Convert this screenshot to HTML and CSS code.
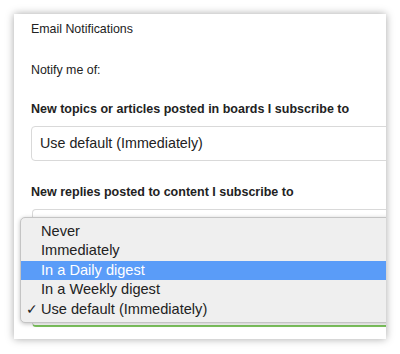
FILE: index.html
```html
<!DOCTYPE html>
<html>
<head>
<meta charset="utf-8">
<link rel="stylesheet" href="styles.css">
</head>
<body>
<div class="panel">
  <div class="title">Email Notifications</div>
  <div class="notify">Notify me of:</div>
  <div class="label">New topics or articles posted in boards I subscribe to</div>
  <div class="select">Use default (Immediately)</div>
  <div class="label label2">New replies posted to content I subscribe to</div>
  <div class="select-wrap">
    <div class="select select2"></div>
    <div class="menu">
      <div class="item">Never</div>
      <div class="item">Immediately</div>
      <div class="item active">In a Daily digest</div>
      <div class="item">In a Weekly digest</div>
      <div class="item checked"><span class="check">✓</span>Use default (Immediately)</div>
    </div>
  </div>
</div>
</body>
</html>
```
FILE: styles.css
```css
html, body {
  margin: 0;
  padding: 0;
  background: #fff;
}
body {
  width: 400px;
  height: 354px;
  overflow: hidden;
  font-family: "Liberation Sans", Arial, sans-serif;
  color: #222;
}
.panel {
  margin: 14px 0 0 14px;
  width: 372px;
  height: 325px;
  background: #fff;
  box-shadow: 0 0 8px rgba(0,0,0,0.35);
  overflow: hidden;
  padding-left: 17px;
  box-sizing: border-box;
}
.title {
  font-size: 12.4px;
  line-height: 14px;
  padding-top: 8px;
}
.notify {
  font-size: 12.4px;
  line-height: 14px;
  margin-top: 27px;
}
.label {
  font-size: 12.5px;
  font-weight: bold;
  line-height: 14px;
  margin-top: 25px;
}
.select {
  margin-top: 10px;
  width: 400px;
  height: 35px;
  border: 1px solid #d9d9d9;
  border-radius: 4px;
  box-sizing: border-box;
  font-size: 14.3px;
  line-height: 33px;
  padding-left: 8px;
  color: #222;
}
.label2 {
  margin-top: 24px;
}
.select-wrap {
  position: relative;
  margin-left: 1px;
}
.select2 {
  margin-top: 10px;
  height: 118px;
  border-bottom: 2px solid #7cc35d;
}
.menu {
  position: absolute;
  left: -12px;
  top: 8px;
  width: 380px;
  height: 106px;
  background: #efefef;
  border: 1px solid #c4c4c4;
  border-radius: 5px;
  box-shadow: 0 1px 4px rgba(0,0,0,0.25);
  padding-top: 3.5px;
  box-sizing: border-box;
}
.item {
  height: 19.6px;
  line-height: 19.6px;
  font-size: 14.6px;
  padding-left: 20px;
  color: #222;
  position: relative;
}
.item.active {
  background: #5a9cf8;
  color: #fff;
}
.check {
  position: absolute;
  left: 5px;
  font-size: 14px;
}
```
